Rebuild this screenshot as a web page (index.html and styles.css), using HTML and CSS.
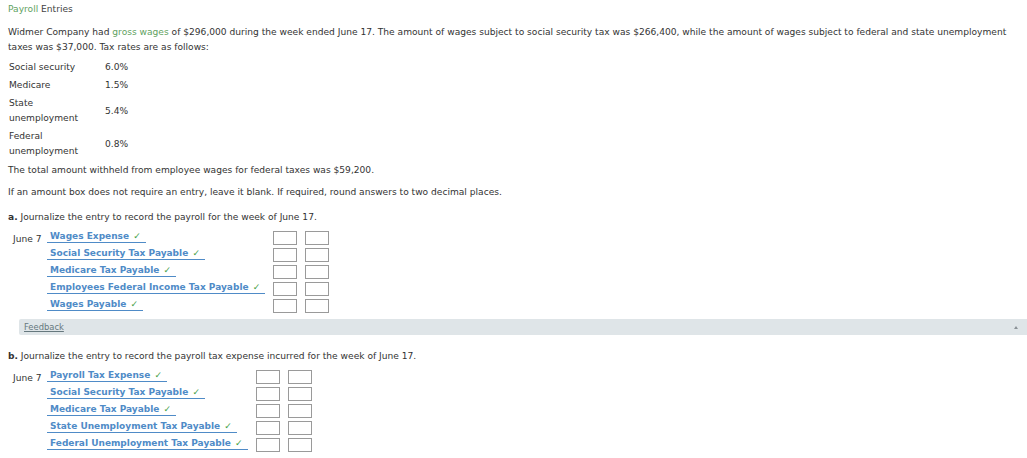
FILE: index.html
```html
<!DOCTYPE html>
<html>
<head>
<meta charset="utf-8">
<link rel="stylesheet" href="styles.css">
</head>
<body>
<div class="page">
  <div class="title"><span class="green">Payroll</span> Entries</div>
  <p class="intro">Widmer Company had <span class="green">gross wages</span> of $296,000 during the week ended June 17. The amount of wages subject to social security tax was $266,400, while the amount of wages subject to federal and state unemployment taxes was $37,000. Tax rates are as follows:</p>
  <table class="rates">
    <tr><td class="lbl">Social security</td><td class="val">6.0%</td></tr>
    <tr><td class="lbl">Medicare</td><td class="val">1.5%</td></tr>
    <tr class="tall"><td class="lbl">State unemployment</td><td class="val">5.4%</td></tr>
    <tr class="tall"><td class="lbl">Federal unemployment</td><td class="val">0.8%</td></tr>
  </table>
  <p class="line1">The total amount withheld from employee wages for federal taxes was $59,200.</p>
  <p class="line2">If an amount box does not require an entry, leave it blank. If required, round answers to two decimal places.</p>

  <p class="q"><b>a.</b> Journalize the entry to record the payroll for the week of June 17.</p>
  <div class="journal">
    <div class="date">June 7</div>
    <div class="acct"><span>Wages Expense <i class="chk">✓</i></span></div>
    <div class="box"></div><div class="box"></div>
    <div class="date"></div>
    <div class="acct"><span>Social Security Tax Payable <i class="chk">✓</i></span></div>
    <div class="box"></div><div class="box"></div>
    <div class="date"></div>
    <div class="acct"><span>Medicare Tax Payable <i class="chk">✓</i></span></div>
    <div class="box"></div><div class="box"></div>
    <div class="date"></div>
    <div class="acct"><span>Employees Federal Income Tax Payable <i class="chk">✓</i></span></div>
    <div class="box"></div><div class="box"></div>
    <div class="date"></div>
    <div class="acct"><span>Wages Payable <i class="chk">✓</i></span></div>
    <div class="box"></div><div class="box"></div>
  </div>

  <div class="feedback"><span class="fb-link">Feedback</span><span class="caret"></span></div>

  <p class="q qb"><b>b.</b> Journalize the entry to record the payroll tax expense incurred for the week of June 17.</p>
  <div class="journal">
    <div class="date">June 7</div>
    <div class="acct"><span>Payroll Tax Expense <i class="chk">✓</i></span></div>
    <div class="box"></div><div class="box"></div>
    <div class="date"></div>
    <div class="acct"><span>Social Security Tax Payable <i class="chk">✓</i></span></div>
    <div class="box"></div><div class="box"></div>
    <div class="date"></div>
    <div class="acct"><span>Medicare Tax Payable <i class="chk">✓</i></span></div>
    <div class="box"></div><div class="box"></div>
    <div class="date"></div>
    <div class="acct"><span>State Unemployment Tax Payable <i class="chk">✓</i></span></div>
    <div class="box"></div><div class="box"></div>
    <div class="date"></div>
    <div class="acct"><span>Federal Unemployment Tax Payable <i class="chk">✓</i></span></div>
    <div class="box"></div><div class="box"></div>
  </div>
</div>
</body>
</html>
```

FILE: styles.css
```css
html, body {
  margin: 0;
  padding: 0;
  background: #fff;
}
body {
  font-family: "DejaVu Sans", Verdana, sans-serif;
  font-size: 9.1px;
  color: #333;
}
.page {
  padding: 3px 0 0 8px;
}
.green { color: #5fa25f; }
.title {
  line-height: 12px;
  color: #444;
}
.intro {
  margin: 10px 0 0 0;
  line-height: 15px;
  padding-right: 12px;
}
.rates {
  border-collapse: collapse;
  margin-top: 3px;
}
.rates td {
  padding: 0 1px;
  vertical-align: middle;
}
.rates .lbl {
  width: 97px;
  box-sizing: border-box;
  padding-right: 22px;
  line-height: 15px;
  height: 18px;
}
.rates .val {
  padding-left: 0;
}
.rates .tall .lbl {
  height: 33px;
}
.line1 {
  margin: 4px 0 0 0;
  line-height: 13px;
}
.line2 {
  margin: 9px 0 0 0;
  line-height: 13px;
}
.q {
  margin: 12px 0 0 0;
  line-height: 13px;
}
.q b { font-weight: bold; }
.journal {
  display: grid;
  grid-template-columns: 34px max-content 24px 24px;
  column-gap: 8px;
  row-gap: 3px;
  margin: 7px 0 0 5px;
}
.journal .date {
  grid-column: 1;
  line-height: 12px;
  padding-top: 2px;
  margin-right: -8px;
  height: 14px;
  box-sizing: border-box;
}
.journal .acct {
  height: 14px;
  margin-left: -8px;
  margin-right: 0;
}
.journal .acct span {
  display: inline-block;
  border-bottom: 1px solid #4f8bc7;
  color: #4f8bc7;
  font-weight: bold;
  font-size: 9px;
  line-height: 11px;
  padding: 0 5px 0 3px;
}
.chk {
  font-style: normal;
  font-weight: bold;
  color: #44a044;
  font-size: 9px;
  margin-left: 1px;
}
.box {
  height: 14px;
  border: 1px solid #9a9a9a;
  box-sizing: border-box;
}
.feedback {
  margin: 6px 0 0 11px;
  height: 16px;
  background: #dfe5e8;
  border-radius: 2px 0 0 2px;
  display: flex;
  align-items: center;
  justify-content: space-between;
  padding: 0 9px 0 5px;
}
.fb-link {
  color: #66787e;
  text-decoration: underline;
  line-height: 12px;
  font-size: 8.4px;
}
.caret {
  width: 0;
  height: 0;
  border-left: 2px solid transparent;
  border-right: 2px solid transparent;
  border-bottom: 3px solid #8a9296;
}
.qb {
  margin-top: 15px;
}
```
